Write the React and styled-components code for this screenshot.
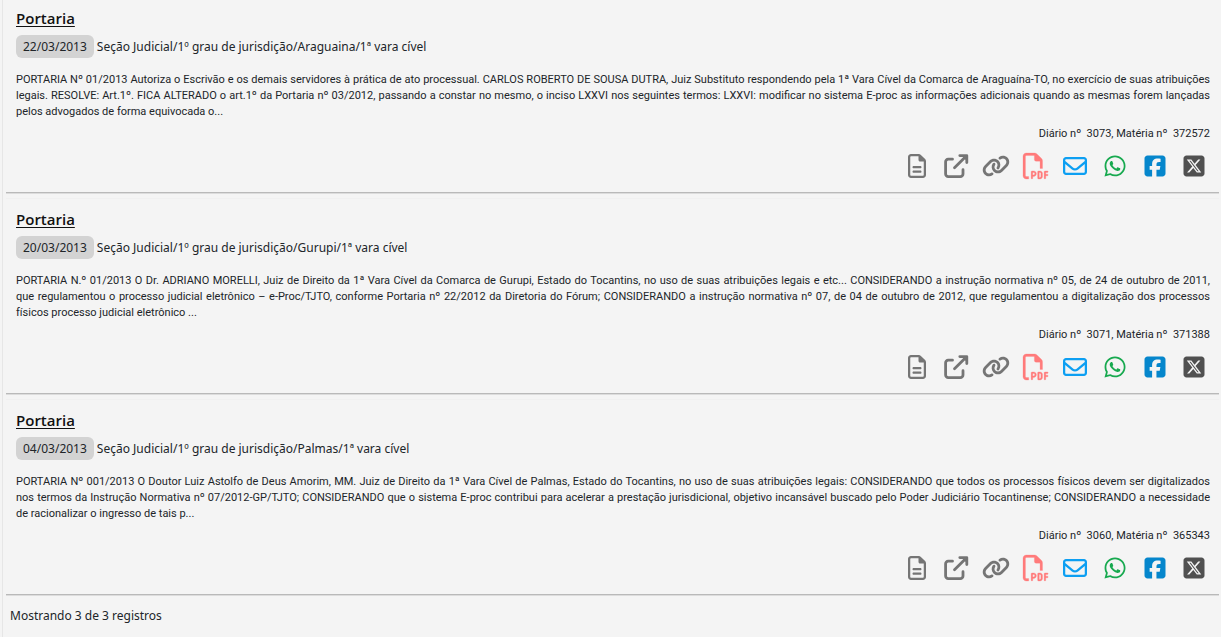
import React from 'react';
import styled, { createGlobalStyle } from 'styled-components';
import {
  FaRegFileLines,
  FaLink,
  FaRegFilePdf,
  FaRegEnvelope,
  FaWhatsapp,
  FaSquareFacebook,
  FaSquareXTwitter,
} from 'react-icons/fa6';

const GlobalStyle = createGlobalStyle`
  * {
    box-sizing: border-box;
  }
  body {
    margin: 0;
    background: #f4f4f4;
    color: #212529;
    font-family: "Noto Sans", "Open Sans", sans-serif;
  }
`;

const Results = styled.main`
  min-height: 100vh;
  margin-left: 2px;
  padding: 0 2px 0 3px;
  border-left: 1px solid #e6e6e6;
`;

const Item = styled.article`
  padding: 6px 0 12px;
  border-bottom: 1px solid #b9b9b9;
  box-shadow: 0 1px 0 #dcdcdc;
  & + & {
    margin-top: 5px;
    padding-top: 8px;
    border-top: 1px solid #f0f0f0;
  }
`;

const Content = styled.div`
  padding: 0 9px 0 10px;
`;

const Title = styled.h2`
  margin: 0 0 5px;
  font-family: "Open Sans", "Noto Sans", sans-serif;
  font-size: 15px;
  line-height: 24px;
  font-weight: 600;
  a {
    color: #111;
    text-decoration: underline;
    text-underline-offset: 2px;
  }
`;

const Origin = styled.div`
  display: flex;
  align-items: center;
  gap: 3px;
  font-size: 12px;
  line-height: 23px;
`;

const DateBadge = styled.time`
  padding: 0 7px;
  border-radius: 6px;
  background: #d3d3d3;
`;

const Summary = styled.p`
  margin: 14px 0 6px;
  font-family: Roboto, sans-serif;
  font-size: 11px;
  line-height: 16px;
  text-align: justify;
  span {
    display: block;
  }
  span:not(:last-child) {
    text-align-last: justify;
  }
`;

const Reference = styled.div`
  font-family: Roboto, sans-serif;
  font-size: 11px;
  line-height: 16px;
  text-align: right;
  white-space: pre;
`;

const Actions = styled.div`
  display: grid;
  grid-template-columns: repeat(8, 1fr);
  width: 317px;
  margin: 10px 5px 0 auto;
`;

const Action = styled.button`
  display: flex;
  align-items: center;
  justify-content: center;
  height: 28px;
  padding: 0;
  border: 0;
  background: none;
  color: ${(props) => props.$color};
  cursor: pointer;
  svg {
    display: block;
    flex: none;
    overflow: visible;
  }
`;

const Footer = styled.footer`
  padding: 11px 4px 9px;
  font-size: 12px;
  line-height: 20px;
`;

const OpenIcon = () => (
  <svg width="24" height="24" viewBox="0 0 24 24" fill="none" stroke="currentColor" strokeWidth="2.8" strokeLinecap="round" strokeLinejoin="round">
    <path d="M8.500 5.200H4.200A2.600 2.600 0 0 0 1.600 7.800V20a2.600 2.600 0 0 0 2.600 2.600h12.200A2.600 2.600 0 0 0 19 20v-4.300" />
    <path d="M15.800 1.600h7v7M22.300 2L10.500 13.800" />
    <path d="M17.500 1.600h5.300v5.300z" fill="currentColor" stroke="none" />
  </svg>
);

const actions = [
  { label: 'Ver texto', color: '#757575', icon: <FaRegFileLines size={24} /> },
  { label: 'Abrir', color: '#757575', icon: <OpenIcon /> },
  { label: 'Copiar link', color: '#757575', icon: <FaLink size={28} /> },
  { label: 'Baixar PDF', color: '#ff7b7b', icon: <FaRegFilePdf size={26} stroke="currentColor" strokeWidth={5} /> },
  { label: 'Enviar por e-mail', color: '#0d9ff2', icon: <FaRegEnvelope size={24} /> },
  { label: 'Compartilhar no WhatsApp', color: '#17a94f', icon: <FaWhatsapp size={24} /> },
  { label: 'Compartilhar no Facebook', color: '#0586cc', icon: <FaSquareFacebook size={24} /> },
  { label: 'Compartilhar no X', color: '#505050', icon: <FaSquareXTwitter size={24} /> },
];

const items = [
  {
    date: '22/03/2013',
    origin: 'Seção Judicial/1º grau de jurisdição/Araguaina/1ª vara cível',
    lines: [
      'PORTARIA Nº 01/2013 Autoriza o Escrivão e os demais servidores à prática de ato processual. CARLOS ROBERTO DE SOUSA DUTRA, Juiz Substituto respondendo pela 1ª Vara Cível da Comarca de Araguaína-TO, no exercício de suas atribuições',
      'legais. RESOLVE: Art.1º. FICA ALTERADO o art.1º da Portaria nº 03/2012, passando a constar no mesmo, o inciso LXXVI nos seguintes termos: LXXVI: modificar no sistema E-proc as informações adicionais quando as mesmas forem lançadas',
      'pelos advogados de forma equivocada o...',
    ],
    diary: '3073',
    matter: '372572',
  },
  {
    date: '20/03/2013',
    origin: 'Seção Judicial/1º grau de jurisdição/Gurupi/1ª vara cível',
    lines: [
      'PORTARIA N.º 01/2013 O Dr. ADRIANO MORELLI, Juiz de Direito da 1ª Vara Cível da Comarca de Gurupi, Estado do Tocantins, no uso de suas atribuições legais e etc... CONSIDERANDO a instrução normativa nº 05, de 24 de outubro de 2011,',
      'que regulamentou o processo judicial eletrônico – e-Proc/TJTO, conforme Portaria nº 22/2012 da Diretoria do Fórum; CONSIDERANDO a instrução normativa nº 07, de 04 de outubro de 2012, que regulamentou a digitalização dos processos',
      'físicos processo judicial eletrônico ...',
    ],
    diary: '3071',
    matter: '371388',
  },
  {
    date: '04/03/2013',
    origin: 'Seção Judicial/1º grau de jurisdição/Palmas/1ª vara cível',
    lines: [
      'PORTARIA Nº 001/2013 O Doutor Luiz Astolfo de Deus Amorim, MM. Juiz de Direito da 1ª Vara Cível de Palmas, Estado do Tocantins, no uso de suas atribuições legais: CONSIDERANDO que todos os processos físicos devem ser digitalizados',
      'nos termos da Instrução Normativa nº 07/2012-GP/TJTO; CONSIDERANDO que o sistema E-proc contribui para acelerar a prestação jurisdicional, objetivo incansável buscado pelo Poder Judiciário Tocantinense; CONSIDERANDO a necessidade',
      'de racionalizar o ingresso de tais p...',
    ],
    diary: '3060',
    matter: '365343',
  },
];

const ResultItem = ({ item }) => (
  <Item>
    <Content>
      <Title><a href="#portaria">Portaria</a></Title>
      <Origin>
        <DateBadge>{item.date}</DateBadge>
        <span>{item.origin}</span>
      </Origin>
      <Summary>
        {item.lines.map((line) => (
          <span key={line}>{line} </span>
        ))}
      </Summary>
      <Reference>{`Diário nº  ${item.diary}, Matéria nº  ${item.matter}`}</Reference>
    </Content>
    <Actions>
      {actions.map((action) => (
        <Action key={action.label} type="button" aria-label={action.label} $color={action.color}>
          {action.icon}
        </Action>
      ))}
    </Actions>
  </Item>
);

const App = () => (
  <>
    <GlobalStyle />
    <Results>
      {items.map((item) => (
        <ResultItem key={item.matter} item={item} />
      ))}
      <Footer>Mostrando 3 de 3 registros</Footer>
    </Results>
  </>
);

export default App;
